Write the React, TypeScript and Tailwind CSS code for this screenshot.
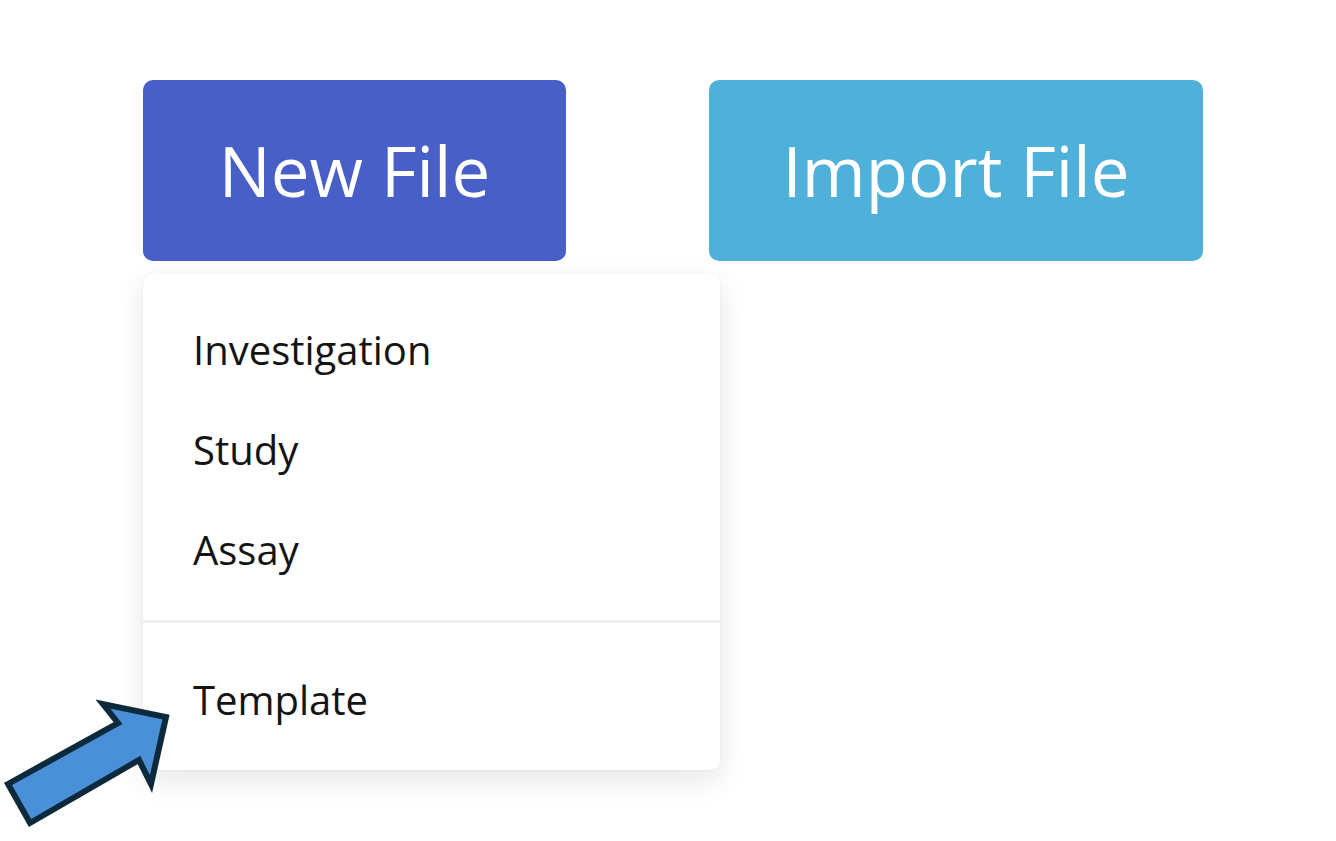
import React from "react";

const items = ["Investigation", "Study", "Assay"];

const PointerArrow: React.FC = () => (
  <svg
    className="absolute left-0 top-0 z-20 pointer-events-none"
    width="200"
    height="841"
    viewBox="0 0 200 841"
  >
    <polygon
      points="8,784 118,723 103,704 166,717 151,784 139,760 30,823"
      fill="#4a90d9"
      stroke="#0d2a3c"
      strokeWidth="6"
      strokeLinejoin="miter"
    />
  </svg>
);

export default function App() {
  return (
    <div
      className="relative w-[1336px] h-[841px] bg-white overflow-hidden"
      style={{ fontFamily: '"Open Sans", "Noto Sans", sans-serif' }}
    >
      <div className="pt-[80px] pl-[143px]">
        <div className="flex gap-[143px]">
          {/* dropdown wrapper */}
          <div className="relative">
            <button className="w-[423px] h-[181px] rounded-[10px] bg-[#485fc7] text-white text-[69px] leading-none flex items-center justify-center">
              New File
            </button>
            <div className="absolute left-0 top-[194px] z-10 w-[577px] rounded-[10px] bg-white shadow-[0_10px_30px_rgba(0,0,0,0.1),0_0_0_1px_rgba(0,0,0,0.02)] pt-[26px] pb-[20px]">
              {items.map((item) => (
                <div
                  key={item}
                  className="h-[100px] pl-[50px] flex items-center text-[40px] text-[#141414]"
                >
                  {item}
                </div>
              ))}
              <div className="mt-[20px] mb-[27px] h-[3px] bg-[#f0f0f3]" />
              <div className="h-[100px] pl-[50px] flex items-center text-[40px] text-[#141414]">
                Template
              </div>
            </div>
          </div>
          <button className="w-[494px] h-[181px] rounded-[10px] bg-[#4fb1d9] text-white text-[69px] leading-none flex items-center justify-center">
            Import File
          </button>
        </div>
      </div>
      <PointerArrow />
    </div>
  );
}
